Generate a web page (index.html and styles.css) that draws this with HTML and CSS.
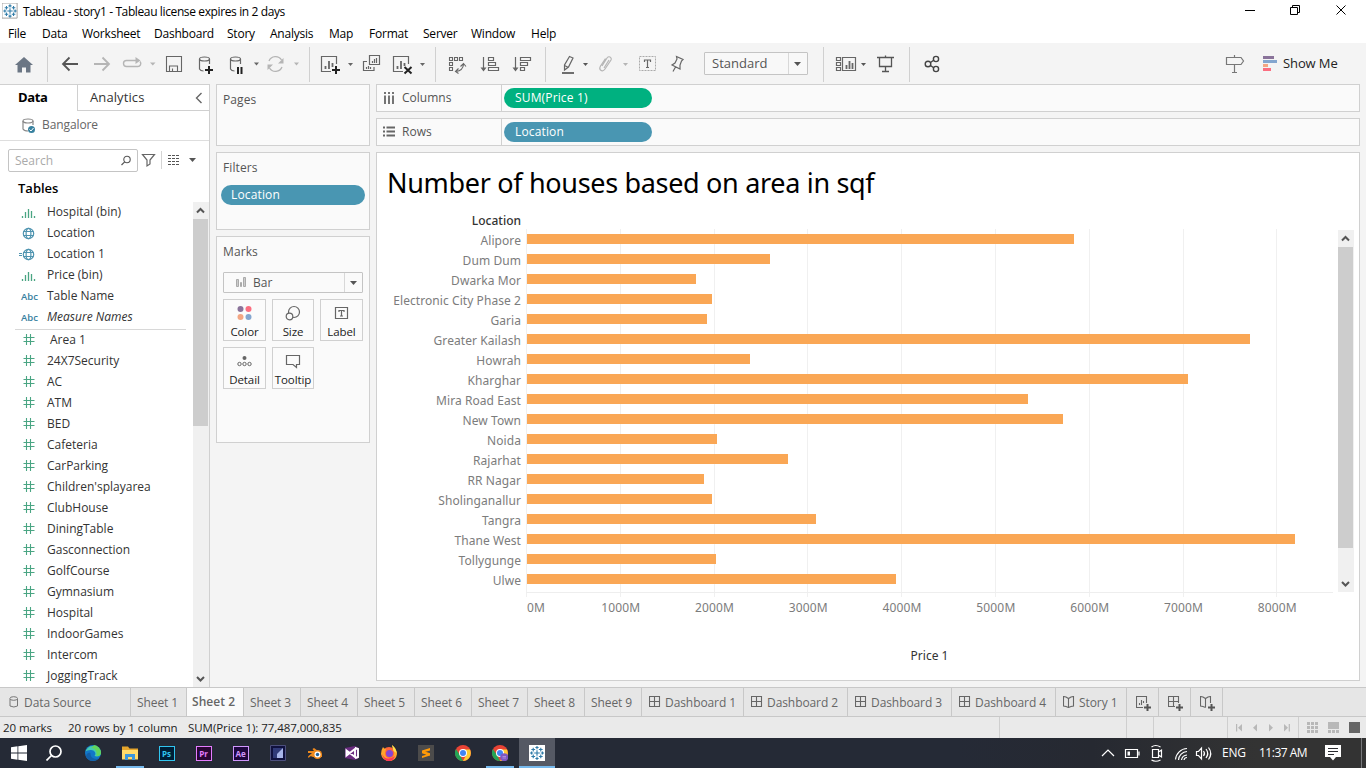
FILE: index.html
```
<!DOCTYPE html>
<html lang="en">
<head>
<meta charset="utf-8">
<title>Tableau - story1</title>
<link rel="stylesheet" href="styles.css">
</head>
<body>
<svg class="defs" width="0" height="0">
  <defs>
    <g id="hash"><path d="M6.500 5v11M10.500 5v11M3.500 8.500h11M3.500 12.500h11" fill="none" stroke="#4aa583" stroke-width="1.100"/></g>
    <g id="bins"><path d="M2.500 14v2M5.500 10v6M8.500 7v9M11.500 9v7M14.500 14v2" fill="none" stroke="#4aa583" stroke-width="1.300"/></g>
    <g id="globe"><g fill="none" stroke="#4f94b0" stroke-width="1.200"><circle cx="8.500" cy="10.500" r="5.200"/><ellipse cx="8.500" cy="10.500" rx="2.400" ry="5.200"/><path d="M3.500 8.500h10M3.500 12.500h10"/></g></g>
    <g id="dash"><path d="M.5.500h10v10H.5zM5.500.500v10M.5 5.500h10" fill="none" stroke="#666" stroke-width="1.100"/></g>
    <g id="book"><path d="M.5.500l2.500.5 2.500 1.500L8 1l2.500-.5v9.500L8 10.500l-2.500 1-2.500-1L.5 10zM5.500 2.500v9" fill="none" stroke="#666" stroke-width="1.100"/></g>
    <g id="logo" fill="none" stroke="#2f7ba8" stroke-width="1.200"><path d="M8 5v6M5 8h6M8 .5v3.500M6.300 2.200h3.400M8 12v3.500M6.300 13.800h3.400M2.200 6.300v3.400M.5 8H4M13.800 6.300v3.400M12 8h3.500M4 2.300v4M2 4.300h4M12 2.300v4M10 4.300h4M4 9.700v4M2 11.700h4M12 9.700v4M10 11.700h4"/></g>
  </defs>
</svg>
<div class="app">
  <header class="titlebar">
    <svg class="applogo" width="18" height="18" viewBox="-1 -1 18 18"><path d="M-1-1h17v17h-17z" fill="#fff" stroke="#999"/><use href="#logo"/></svg>
    <span class="apptitle">Tableau - story1 - Tableau license expires in 2 days</span>
    <svg class="winbtns" width="126" height="24" viewBox="1240 0 126 24"><g fill="none" stroke="#000"><path d="M1245 10.500h10M1290.500 7.500h7v7h-7zM1292.500 7.500v-2h7v7h-2M1336.500 5.500l9 9M1345.500 5.500l-9 9"/></g></svg>
  </header>
  <nav class="menubar">
    <span class="m1">File</span><span class="m2">Data</span><span class="m3">Worksheet</span><span class="m4">Dashboard</span><span class="m5">Story</span><span class="m6">Analysis</span><span class="m7">Map</span><span class="m8">Format</span><span class="m9">Server</span><span class="m10">Window</span><span>Help</span>
  </nav>
  <div class="toolbar">
    <svg width="47" height="41" viewBox="0 43 47 41"><path d="M24 57l9 8h-2.500v7.500h-4.500v-5h-4v5h-4.500V65H15z" fill="#6b7684"/></svg><i class="sep"></i>
    <svg width="36" height="41" viewBox="48 43 36 41"><path d="M78 64H63M69.500 57.500L63 64l6.500 6.500" fill="none" stroke="#555" stroke-width="1.800"/></svg>
    <svg width="34" height="41" viewBox="84 43 34 41"><path d="M94 64h15M102.500 57.500L109 64l-6.500 6.500" fill="none" stroke="#b5b5b5" stroke-width="1.800"/></svg>
    <svg width="42" height="41" viewBox="118 43 42 41"><path d="M131 60.500h-4.500a3 3 0 0 0 0 6h11a3 3 0 0 0 2.500-5M130 60.500h7" fill="none" stroke="#b5b5b5" stroke-width="1.400"/><path d="M135.500 57l5 3.500-5 3.500zM150 62.500h5.500l-2.700 3z" fill="#b5b5b5"/></svg>
    <svg width="30" height="41" viewBox="160 43 30 41"><path d="M166.500 56.500h15v15h-15zM169.500 71v-5h8v5M172.500 71v-2.500" fill="none" stroke="#666" stroke-width="1.100"/></svg>
    <svg width="32" height="41" viewBox="190 43 32 41"><g fill="none" stroke="#666" stroke-width="1.200"><ellipse cx="204.500" cy="59" rx="5" ry="2"/><path d="M199.500 59v10q1 2 4 2M209.500 59v5"/></g><path d="M209 66v8M205 70h8" stroke="#222" stroke-width="2"/></svg>
    <svg width="41" height="41" viewBox="222 43 41 41"><g fill="none" stroke="#666" stroke-width="1.200"><ellipse cx="235.500" cy="59" rx="5" ry="2"/><path d="M230.500 59v10q1 2 4 2M240.500 59v5"/></g><path d="M238 67v7M241.500 67v7" stroke="#222" stroke-width="2"/><path d="M254 62.500h5l-2.500 3z" fill="#666"/></svg>
    <svg width="46" height="41" viewBox="263 43 46 41"><path d="M269 61a7 7 0 0 1 12.500-1M282 67a7 7 0 0 1-12.500 1" fill="none" stroke="#b5b5b5" stroke-width="1.300"/><path d="M283.500 58v5.500h-5.500zM267.500 70v-5.500h5.500zM294 62.500h5l-2.500 3z" fill="#b5b5b5"/></svg><i class="sep"></i>
    <svg width="47" height="41" viewBox="310 43 47 41"><path d="M336.500 64v-7.500h-15v15H331" fill="none" stroke="#666" stroke-width="1.200"/><path d="M325.500 69v-3M329 69v-8M332.500 67v-4" stroke="#666" stroke-width="1.800"/><path d="M336 66v8M332 70h8" stroke="#222" stroke-width="2"/><path d="M348 63h5l-2.500 3z" fill="#666"/></svg>
    <svg width="29" height="41" viewBox="357 43 29 41"><g fill="none" stroke="#666" stroke-width="1.200"><path d="M369.500 55.500h10v9h-10zM367 61.500h-3.500v9h10.500V67"/><path d="M372.500 63v-2M374.500 63v-4M376.500 63v-5M366.500 69v-2M368.500 69v-3M370.500 69v-2"/></g></svg>
    <svg width="49" height="41" viewBox="386 43 49 41"><path d="M408.500 64v-7.500h-15v15H403" fill="none" stroke="#666" stroke-width="1.200"/><path d="M397.500 69v-3M401 69v-8M404.500 66v-3" stroke="#666" stroke-width="1.800"/><path d="M404.500 67l7 6.500M411.500 67l-7 6.500" stroke="#222" stroke-width="2"/><path d="M420 63h5l-2.500 3z" fill="#666"/></svg><i class="sep"></i>
    <svg width="37" height="41" viewBox="436 43 37 41"><path d="M449.500 57.500h3v3h-3zM454.500 57.500h3v3h-3zM459.500 57.500h3v3h-3zM449.500 62.500h3v3h-3zM449.500 67.500h3v3h-3zM463.500 64.500q-.5 6-7.500 7M460.500 66.500l3-3 2.500 3M458.500 68.500l-3 3 3 2" fill="none" stroke="#666" stroke-width="1.100"/></svg>
    <svg width="34" height="41" viewBox="473 43 34 41"><path d="M483.500 57v13M488.500 57.500h5v3h-5zM488.500 62.500h7v3h-7zM488.500 67.500h10v3h-10z" fill="none" stroke="#666" stroke-width="1.200"/><path d="M480.500 67.500h6l-3 4z" fill="#666"/></svg>
    <svg width="38" height="41" viewBox="507 43 38 41"><path d="M515.500 57v13M520.500 57.500h10v3h-10zM520.500 62.500h7v3h-7zM520.500 67.500h4v3h-4z" fill="none" stroke="#666" stroke-width="1.200"/><path d="M512.500 67.500h6l-3 4z" fill="#666"/></svg><i class="sep"></i>
    <svg width="46" height="41" viewBox="546 43 46 41"><path d="M569.500 56.500l3.500 1.500-4.500 9-4 3v-5zM564.500 65.500l4 2" fill="none" stroke="#666" stroke-width="1.200"/><path d="M562 73h12" stroke="#555" stroke-width="1.700"/><path d="M583 63h5l-2.500 3z" fill="#555"/></svg>
    <svg width="41" height="41" viewBox="592 43 41 41"><path d="M602 66l5-8q2-2.500 4 0 .5 1 0 2l-6 9q-2 3-4.500 1-1.500-1.500 0-4l5-7.500M604 68l5-8" fill="none" stroke="#b5b5b5" stroke-width="1.200"/><path d="M623 63h5l-2.500 3z" fill="#b5b5b5"/></svg>
    <svg width="31" height="41" viewBox="633 43 31 41"><path d="M639.500 56.500h16v14h-16z" fill="none" stroke="#aaa" stroke-dasharray="2 1"/><path d="M644.500 62v-2h6v2M647.500 60v8M646 67.500h3" fill="none" stroke="#666" stroke-width="1.200"/></svg>
    <svg width="40" height="41" viewBox="664 43 40 41"><path d="M676.500 56.500l6.500 3-1.500 1.500-1.500 4v4l-8-4 3-2 2-4zM675.500 67l-2.500 4.500" fill="none" stroke="#666" stroke-width="1.200"/></svg>
    <div class="fit"><span>Standard</span><b><svg width="7" height="4"><path d="M0 0h7L3.500 4z" fill="#555"/></svg></b></div>
    <i class="sep afterfit"></i>
    <svg width="47" height="41" viewBox="824 43 47 41"><path d="M836.500 57.500h4v3h-4zM836.500 62.500h4v3h-4zM836.500 67.500h4v3h-4zM842.500 57.500h13v13h-13z" fill="none" stroke="#666" stroke-width="1.200"/><path d="M846.500 69v-4M849.500 69v-8M852.500 69v-6" stroke="#666" stroke-width="1.800"/><path d="M861 63h5l-2.500 3z" fill="#555"/></svg>
    <svg width="38" height="41" viewBox="871 43 38 41"><path d="M877 57.500h17M879.500 57.500v9h12v-9M885.500 55.500v2M885.500 66.500v5M882 71.500h7" fill="none" stroke="#555" stroke-width="1.300"/></svg><i class="sep"></i>
    <svg width="40" height="41" viewBox="910 43 40 41"><g fill="none" stroke="#444" stroke-width="1.400"><circle cx="928" cy="64" r="2.800"/><circle cx="936" cy="59" r="2.600"/><circle cx="936" cy="69" r="2.600"/><path d="M930.500 62.500l3.500-2.500M930.500 65.500l3.500 2.500"/></g></svg>
    <svg class="guide" width="40" height="41" viewBox="1215 43 40 41"><path d="M1226.500 57.500h14.500l2.500 3.500-2.500 3.500h-14.500zM1234.500 55v2.500M1234.500 64.500v8M1232 72.500h5" fill="none" stroke="#777" stroke-width="1.200"/></svg>
    <svg width="28" height="41" viewBox="1255 43 28 41"><path d="M1263 56h11v3h-11z" fill="#8a739a"/><path d="M1263 60h14v3h-14z" fill="#84a6cf"/><path d="M1263 64h5v3h-5z" fill="#f3a683"/><path d="M1263 68h8v3h-8z" fill="#fb6e80"/></svg>
    <span class="showme">Show Me</span>
  </div>
  <div class="main">
    <aside class="datapane">
      <div class="panetabs"><b>Data</b><span><em>Analytics</em><svg width="8" height="12"><path d="M6.500 1L1.500 6l5 5" fill="none" stroke="#666" stroke-width="1.400"/></svg></span></div>
      <div class="source"><svg width="16" height="18"><g fill="none" stroke="#888" stroke-width="1.200"><ellipse cx="6" cy="4" rx="5" ry="2"/><path d="M1 4v8q1 2 5 2M11 4v4"/></g><circle cx="9.500" cy="12.500" r="3.500" fill="#38819f"/><path d="M7.500 12.500l1.500 1.500 2.500-3" fill="none" stroke="#fff"/></svg><span>Bangalore</span></div>
      <div class="searchrow"><div class="search"><span>Search</span><svg width="12" height="12"><circle cx="7" cy="4.500" r="3.200" fill="none" stroke="#555" stroke-width="1.100"/><path d="M4.700 6.800L1.500 10" stroke="#555" stroke-width="1.200"/></svg></div>
        <svg width="72" height="24" viewBox="137 148 72 24"><path d="M142.500 154.500h12l-4.500 5.500v4l-3 2v-6z" fill="none" stroke="#666" stroke-width="1.200"/><path d="M161.500 151v18" stroke="#d4d4d4"/><path d="M168 155.500h12M168 158.500h12M168 161.500h12M168 164.500h12" stroke="#555" stroke-dasharray="3 1"/><path d="M189 158h7l-3.500 4z" fill="#555"/></svg></div>
      <div class="tables">Tables</div>
      <div class="fields">
        <ul>
          <li><svg><use href="#bins"/></svg>Hospital (bin)</li>
          <li><svg><use href="#globe"/></svg>Location</li>
          <li><svg class="calc" viewBox="-4 0 24 21"><use href="#globe"/><path d="M-1 9.500h3M-1 11.500h3" stroke="#4f94b0"/></svg>Location 1</li>
          <li><svg><use href="#bins"/></svg>Price (bin)</li>
          <li><i class="abc">Abc</i>Table Name</li>
          <li class="last"><i class="abc">Abc</i><em>Measure Names</em></li>
          <li class="area"><svg class="ahash"><use href="#hash" x="5"/></svg>Area 1</li>
          <li><svg><use href="#hash" x="0"/></svg>24X7Security</li>
          <li><svg><use href="#hash"/></svg>AC</li>
          <li><svg><use href="#hash"/></svg>ATM</li>
          <li><svg><use href="#hash"/></svg>BED</li>
          <li><svg><use href="#hash"/></svg>Cafeteria</li>
          <li><svg><use href="#hash"/></svg>CarParking</li>
          <li><svg><use href="#hash"/></svg>Children'splayarea</li>
          <li><svg><use href="#hash"/></svg>ClubHouse</li>
          <li><svg><use href="#hash"/></svg>DiningTable</li>
          <li><svg><use href="#hash"/></svg>Gasconnection</li>
          <li><svg><use href="#hash"/></svg>GolfCourse</li>
          <li><svg><use href="#hash"/></svg>Gymnasium</li>
          <li><svg><use href="#hash"/></svg>Hospital</li>
          <li><svg><use href="#hash"/></svg>IndoorGames</li>
          <li><svg><use href="#hash"/></svg>Intercom</li>
          <li><svg><use href="#hash"/></svg>JoggingTrack</li>
        </ul>
        <div class="scroll"><svg width="15" height="17"><path d="M4 10.500L7.500 7l3.500 3.500" fill="none" stroke="#555" stroke-width="2"/></svg><i class="thumb"></i><svg class="down" width="15" height="17"><path d="M4 7l3.500 3.500L11 7" fill="none" stroke="#555" stroke-width="2"/></svg></div>
      </div>
    </aside>
    <section class="cards">
      <div class="card pages"><h3>Pages</h3></div>
      <div class="card filters"><h3>Filters</h3><div class="pill blue">Location</div></div>
      <div class="card marks"><h3>Marks</h3>
        <div class="marktype"><svg width="11" height="11"><path d="M.5 2.500h2v7h-2zM4.500 5.500h1v4h-1zM7.500.500h2v9h-2z" fill="#ccc" stroke="#aaa"/></svg><span>Bar</span><b><svg width="7" height="4"><path d="M0 0h7L3.500 4z" fill="#555"/></svg></b></div>
        <div class="markgrid">
          <div><svg width="16" height="16"><circle cx="3.500" cy="4" r="3" fill="#8a739a"/><circle cx="11.500" cy="4" r="3" fill="#fb6e80"/><circle cx="3.500" cy="12" r="3" fill="#f3a683"/><circle cx="11.500" cy="12" r="3" fill="#84a6cf"/></svg><span>Color</span></div>
          <div><svg width="16" height="16"><g fill="#fafafa" stroke="#666" stroke-width="1.200"><circle cx="9" cy="7" r="5.500"/><circle cx="4.500" cy="11.500" r="3.300"/></g></svg><span>Size</span></div>
          <div><svg width="16" height="16"><path d="M1.500 2.500h12v11h-12zM5 7V5.500h5V7M7.500 5.500v5.500M6 11h3" fill="none" stroke="#666" stroke-width="1.200"/></svg><span>Label</span></div>
          <div><svg width="16" height="16"><circle cx="7.500" cy="5" r="2" fill="#666"/><g fill="none" stroke="#666"><circle cx="2.500" cy="11" r="1.700"/><circle cx="7.500" cy="11" r="1.700"/><circle cx="12.500" cy="11" r="1.700"/></g></svg><span>Detail</span></div>
          <div><svg width="16" height="16"><path d="M1.500 2.500h13v9h-3v3l-3.500-3H1.500z" fill="none" stroke="#666" stroke-width="1.200"/></svg><span>Tooltip</span></div>
        </div>
      </div>
    </section>
    <section class="sheet">
      <div class="shelf"><div class="shelfname"><svg width="12" height="12"><path d="M2 0v2M6 0v2M10 0v2M2 3.500V12M6 3.500V12M10 3.500V12" stroke="#666" stroke-width="1.800"/></svg><span>Columns</span></div><div class="pill green">SUM(Price 1)</div></div>
      <div class="shelf"><div class="shelfname"><svg width="12" height="12"><path d="M0 1.500h2M0 5.500h2M0 9.500h2M3.500 1.500H12M3.500 5.500H12M3.500 9.500H12" stroke="#666" stroke-width="1.800"/></svg><span>Rows</span></div><div class="pill blue">Location</div></div>
      <div class="view">
        <h1>Number of houses based on area in sqf</h1>
        <div class="chart">
          <div class="labels"><b>Location</b><span>Alipore</span><span>Dum Dum</span><span>Dwarka Mor</span><span>Electronic City Phase 2</span><span>Garia</span><span>Greater Kailash</span><span>Howrah</span><span>Kharghar</span><span>Mira Road East</span><span>New Town</span><span>Noida</span><span>Rajarhat</span><span>RR Nagar</span><span>Sholinganallur</span><span>Tangra</span><span>Thane West</span><span>Tollygunge</span><span>Ulwe</span></div>
          <div class="plotcol">
            <div class="plot">
              <i style="width:547px"></i><i style="width:243px"></i><i style="width:169px"></i><i style="width:185px"></i><i style="width:180px"></i><i style="width:723px"></i><i style="width:223px"></i><i style="width:661px"></i><i style="width:501px"></i><i style="width:536px"></i><i style="width:190px"></i><i style="width:261px"></i><i style="width:177px"></i><i style="width:185px"></i><i style="width:289px"></i><i style="width:768px"></i><i style="width:189px"></i><i style="width:369px"></i>
            </div>
            <div class="marksline"></div>
            <div class="ticks"><span>0M</span><span>1000M</span><span>2000M</span><span>3000M</span><span>4000M</span><span>5000M</span><span>6000M</span><span>7000M</span><span>8000M</span></div>
            <div class="axis">Price 1</div>
          </div>
          <div class="scroll vscroll"><svg width="15" height="17"><path d="M4 10.500L7.500 7l3.500 3.500" fill="none" stroke="#555" stroke-width="2"/></svg><i class="thumb"></i><svg class="down" width="15" height="17"><path d="M4 7l3.500 3.500L11 7" fill="none" stroke="#555" stroke-width="2"/></svg></div>
        </div>
      </div>
    </section>
  </div>
  <div class="tabs">
    <div class="tab ds"><svg width="10" height="12"><path d="M1 3v7q4 2 7.500 0V3" fill="none" stroke="#777"/><ellipse cx="4.700" cy="2.500" rx="3.800" ry="1.800" fill="none" stroke="#777"/></svg><span>Data Source</span></div>
    <div class="tab s56">Sheet 1</div><div class="tab s57 on">Sheet 2</div><div class="tab s57">Sheet 3</div><div class="tab s57">Sheet 4</div><div class="tab s57">Sheet 5</div><div class="tab s57">Sheet 6</div><div class="tab s56">Sheet 7</div><div class="tab s57">Sheet 8</div><div class="tab s57">Sheet 9</div>
    <div class="tab d1"><svg width="12" height="12"><use href="#dash"/></svg>Dashboard 1</div><div class="tab d2"><svg width="12" height="12"><use href="#dash"/></svg>Dashboard 2</div><div class="tab d2"><svg width="12" height="12"><use href="#dash"/></svg>Dashboard 3</div><div class="tab d2"><svg width="12" height="12"><use href="#dash"/></svg>Dashboard 4</div>
    <div class="tab st"><svg width="12" height="12"><use href="#book"/></svg>Story 1</div>
    <div class="tab add"><svg width="16" height="17"><path d="M10.500 7V.5H.5v11H7M3.500 9V7M5.500 9V4M7.500 7V5" fill="none" stroke="#666" stroke-width="1.100"/><path d="M11.500 8v7M8 11.500h7" stroke="#555" stroke-width="2"/></svg></div>
    <div class="tab add"><svg width="16" height="17"><path d="M10.500 7V.5H.5v10H7M5.500.5v10M.5 5.500h10" fill="none" stroke="#666" stroke-width="1.100"/><path d="M11.500 8v7M8 11.500h7" stroke="#555" stroke-width="2"/></svg></div>
    <div class="tab add"><svg width="16" height="17"><path d="M10.500 7V.5L8 1 5.500 2.500 3 1 .5.500V10l2.500.5 2.500 1M5.500 2.500v9" fill="none" stroke="#666" stroke-width="1.100"/><path d="M11.500 8v7M8 11.500h7" stroke="#555" stroke-width="2"/></svg></div>
  </div>
  <div class="status">
    <span class="c1">20 marks</span><span class="c2">20 rows by 1 column</span><span class="c3">SUM(Price 1): 77,487,000,835</span>
    <i class="w1"></i><i class="w2"></i><i class="w3"></i><i class="w4"></i>
    <svg width="139" height="21" viewBox="1227 717 139 21"><path d="M1227.500 717v21M1298.500 717v21" stroke="#cfcfcf"/><path d="M1236 724h1.200v7.500h-1.200zM1242 724v7.500l-4-3.700zM1257 724v7.500l-4-3.700zM1269 724v7.500l4-3.700zM1284 724v7.500l4-3.700zM1288.700 724h1.200v7.500h-1.200z" fill="#b8b8b8"/><path d="M1307 723.500h11M1307 727.500h11M1307 731.500h11" stroke="#b8b8b8" stroke-width="3" stroke-dasharray="3 1"/><path d="M1328 722h11v7h-11z" fill="#b8b8b8"/><path d="M1328 731.500h11" stroke="#b8b8b8" stroke-width="3" stroke-dasharray="3 1"/><path d="M1349 722h11v11h-11z" fill="#666"/></svg>
  </div>
  <footer class="taskbar">
    <div class="apps">
      <div><svg viewBox="0 0 16 16"><path d="M0 2.200l6.500-.9v6.200H0zM7.300 1.200L16 0v7.500H7.300zM0 8.500h6.500v6.200L0 13.800zM7.300 8.500H16V16l-8.700-1.200z" fill="#fff"/></svg></div>
      <div class="find"><svg viewBox="0 0 16 16"><circle cx="9.500" cy="6.500" r="5.500" fill="none" stroke="#fff" stroke-width="1.700"/><path d="M5.500 10.500L.5 15.500" stroke="#fff" stroke-width="1.700"/></svg></div>
      <div><svg viewBox="0 0 16 16"><circle cx="8" cy="8" r="8" fill="#1277c9"/><path d="M.5 6.500A8 8 0 0 1 16 7.500c0 4-4 4.500-6.500 3.500C12 8 9 4.500 5.500 5 3 5 1.500 6 .5 6.500z" fill="#45cbb0"/><path d="M9 .1A8 8 0 0 1 16 7.500c0 3-2.500 4-4.500 3.500 1-5-2-8-5-8z" fill="#62d55d"/><path d="M5.500 8c-.5 4 3.500 7 8 5.500A8 8 0 0 1 1 12C1 9 3 7 5.500 8z" fill="#135fa8"/></svg></div>
      <div class="run"><svg viewBox="0 0 16 16"><path d="M0 1.500h6l1.500 2H16V14H0z" fill="#e5a52c"/><path d="M0 5h16v9.500H0z" fill="#ffdb6a"/><path d="M3 15V9h10v6h-3v-3H6v3z" fill="#3b97dc"/></svg></div>
      <div><b class="adobe ps">Ps</b></div>
      <div><b class="adobe pr">Pr</b></div>
      <div><b class="adobe ae">Ae</b></div>
      <div><svg viewBox="0 0 16 16"><path d="M.5.500h15v15H.5z" fill="#10113f" stroke="#4c4f7d"/><path d="M3 3h10v10H3z" fill="#303a79"/><path d="M3 3l10 10H3z" fill="#a8b5e9" transform="rotate(-90 8 8)"/><path d="M3 8h4v5H3z" fill="#303a79"/></svg></div>
      <div><svg viewBox="0 0 16 16"><path d="M1 6h6L5.500 4 7 3l8 6v3H6l-2.500-1L6 9 1.500 13 1 11.500 5 8H1z" fill="#f08a1d"/><circle cx="10.500" cy="9.500" r="4.500" fill="#f08a1d"/><circle cx="10.500" cy="9.500" r="3" fill="#fff"/><circle cx="10.500" cy="9.500" r="1.700" fill="#22639e"/></svg></div>
      <div><svg viewBox="0 0 16 16"><path d="M1 3l10-2 4 2v10l-4 2-10-2z" fill="#6a2c80"/><path d="M2.500 5.500L11 12V4L2.500 10.500zM11 3l3 1v8l-3 1" fill="none" stroke="#fff" stroke-width="1.900"/></svg></div>
      <div><svg viewBox="0 0 16 16"><circle cx="8" cy="9" r="7" fill="#ff653b"/><path d="M2 2q1 2 3 2L4 8q0 5 5 5 5-1 4-6L11 0q5 4 5 9-1 7-8 7-7-1-8-7 0-4 2-7z" fill="#ffa52b"/><circle cx="8.500" cy="8.500" r="3.500" fill="#8446d5"/><path d="M1 9q4 8 13 2-2 6-8 5Q2 14 1 9z" fill="#ff3858"/><path d="M11 0q4 3 4.500 8l-3-2z" fill="#ffe14d"/></svg></div>
      <div><svg viewBox="0 0 16 16"><path d="M0 0h16v16H0z" fill="#4c4b4b"/><path d="M12 3L4 5.500v2.700L12 11v-2.500L7 7l5-1.500zM4 13l8-2.500V8.200L4 5.500V8l5 1.600-5 1.400z" fill="#ff9a08"/></svg></div>
      <div><svg viewBox="0 0 16 16"><circle cx="8" cy="8" r="8" fill="#ea4335"/><path d="M1 4l4.500 7 2.500 5A8 8 0 0 1 1 4z" fill="#24a455"/><path d="M15 4.500H8l3.500 5L8 16a8 8 0 0 0 7-11.500z" fill="#ffcc33"/><circle cx="8" cy="8" r="4" fill="#fff"/><circle cx="8" cy="8" r="3" fill="#4285f4"/></svg></div>
      <div class="run"><svg viewBox="0 0 16 16"><circle cx="8" cy="8" r="8" fill="#ea4335"/><path d="M1 4l4.500 7 2.500 5A8 8 0 0 1 1 4z" fill="#24a455"/><path d="M15 4.500H8l3.500 5L8 16a8 8 0 0 0 7-11.500z" fill="#ffcc33"/><circle cx="8" cy="8" r="4" fill="#fff"/><circle cx="8" cy="8" r="3" fill="#4285f4"/><circle cx="12.200" cy="12.200" r="4" fill="#7e57c2"/><path d="M10.500 11.500h3.500M10.500 13h3.500" stroke="#b89be0" stroke-width=".8"/></svg></div>
      <div class="active"><svg viewBox="-.5 -.5 17 17"><path d="M-.5-.5h17v17h-17z" fill="#fff"/><use href="#logo"/></svg></div>
    </div>
    <svg class="tray" width="121" height="30" viewBox="1095 738 121 30"><g fill="none" stroke="#fff" stroke-width="1.200"><path d="M1102 756l6-6 6 6M1125.500 749.500h12v8h-12zM1139 751.500v4"/><path d="M1127.500 751.500h2.500v4h-2.500z" fill="#fff" stroke="none"/><path d="M1152.500 749.500h6v8h-6zM1158.500 752l3-2v7l-3-2M1151.500 747q4-3 9 0M1151.500 760q4 2.500 9 0"/><path d="M1175.500 759.500a12 12 0 0 1 11.500-11M1178.500 760a9 9 0 0 1 8.500-8.500M1181.500 760a6 6 0 0 1 5.500-5M1184 760a3 3 0 0 1 3-2.500"/><path d="M1196.500 751.500h2l3-3.500v11l-3-3.500h-2zM1203.500 751q2 2.500 0 5M1206 749q3.500 4.500 0 9M1208.500 747.500q4.500 6 0 12"/></g></svg>
    <span class="lang">ENG</span><span class="clock">11:37 AM</span>
    <svg class="note" width="45" height="30" viewBox="1321 738 45 30"><path d="M1325 745h16v12h-5l-3 3.500-3-3.500h-5z" fill="#fff"/><path d="M1328 748.500h10M1328 751.500h10M1328 754.500h6" stroke="#2b2c31"/><path d="M1361.500 738v30" stroke="#77787b"/></svg>
  </footer>
</div>
</body>
</html>
```
FILE: styles.css
```
* { box-sizing: border-box; }
body { margin: 0; width: 1366px; height: 768px; overflow: hidden; font-family: "Open Sans", "Noto Sans", sans-serif; font-size: 12px; color: #222; background: #f4f4f4; }
svg { display: block; flex: none; }
.defs { position: absolute; }
.app { display: flex; flex-direction: column; width: 1366px; height: 768px; }
span, b, em, h1, h3 { white-space: nowrap; }
.titlebar { height: 24px; background: #fff; display: flex; align-items: center; padding-left: 2px; color: #000; }
.applogo { width: 16px; height: 16px; margin-top: -2px; }
.apptitle { margin: -2px 0 0 5px; font-size: 12px; letter-spacing: -.38px; }
.winbtns { margin-left: auto; }
.menubar { height: 19px; background: #fff; display: flex; align-items: center; padding-left: 8px; color: #000; letter-spacing: -.22px; line-height: 19px; }
.m1 { width: 34px; } .m2 { width: 40px; } .m3 { width: 72px; } .m4 { width: 73px; } .m5 { width: 43px; } .m6 { width: 59px; } .m7 { width: 40px; } .m8 { width: 54px; } .m9 { width: 48px; } .m10 { width: 60px; }
.toolbar { height: 41px; display: flex; background: #f4f4f4; }
.sep { width: 1px; height: 35px; margin-top: 4px; background: #d0d0d0; }
.fit { width: 104px; height: 23px; margin-top: 9px; border: 1px solid #c4c4c4; border-radius: 1px; background: #f8f8f8; display: flex; color: #555; font-size: 13px; line-height: 21px; }
.fit span { flex: 1; padding-left: 7px; letter-spacing: 0; }
.fit b { width: 19px; border-left: 1px solid #d8d8d8; padding: 9px 0 0 5px; }
.afterfit { margin-left: 15px; }
.guide { margin-left: auto; }
.showme { width: 83px; line-height: 40px; font-size: 13px; letter-spacing: -.1px; }
.main { height: 603px; display: flex; }
.datapane { width: 210px; border-top: 1px solid #d0d0d0; border-right: 1px solid #d0d0d0; background: #fff; display: flex; flex-direction: column; }
.panetabs { height: 26px; display: flex; font-size: 13px; line-height: 25px; color: #000; }
.panetabs > b { width: 77px; padding-left: 18px; letter-spacing: -.4px; }
.panetabs > span { flex: 1; display: flex; align-items: center; justify-content: space-between; border-left: 1px solid #d0d0d0; border-bottom: 1px solid #d0d0d0; padding: 0 6px 0 12px; color: #333; }
.panetabs em { letter-spacing: .1px; }
em { font-style: normal; }
.source { height: 30px; border-bottom: 1px solid #dedede; display: flex; align-items: center; padding-left: 22px; gap: 4px; color: #666; letter-spacing: -.1px; }
.source span { margin-top: -2px; }
.searchrow { display: flex; height: 24px; margin-top: 7px; padding-left: 8px; }
.search { width: 130px; height: 23px; margin-top: 1px; border: 1px solid #c4c4c4; border-radius: 2px; display: flex; align-items: center; justify-content: space-between; padding: 0 5px 0 6px; color: #aaa; }
.searchrow > svg { margin-left: -1px; }
.tables { height: 30px; padding-left: 18px; line-height: 32px; font-size: 13px; font-weight: 600; color: #000; }
.fields { flex: 1; min-height: 0; display: flex; }
.fields ul { list-style: none; margin: 0; padding: 0; width: 193px; overflow: hidden; }
.fields li { height: 21px; line-height: 20px; padding-left: 20px; display: flex; color: #333; white-space: nowrap; }
.fields li svg { width: 20px; height: 21px; margin-right: 7px; }
.fields li use[href="#hash"] { transform: translate(0, -1px); }
.fields li .calc { width: 24px; margin-left: -4px; }
.fields li em { font-style: italic; }
.fields .abc { width: 27px; padding-left: 1px; font: 600 9.500px/22px "Open Sans", sans-serif; color: #38819f; }
.fields .last { height: 23px; }
.fields .area { height: 21px; box-shadow: 0 -1px 0 #d8d8d8; margin-left: 15px; width: 171px; padding-left: 0; }
.fields .area .ahash { width: 25px; margin-right: 10px; }
.scroll { width: 16px; background: #f0f0f0; display: flex; flex-direction: column; }
.thumb { display: block; height: 207px; background: #cdcdcd; width: 15px; }
.scroll .down { margin-top: auto; }
.cards { width: 154px; margin-left: 6px; display: flex; flex-direction: column; gap: 6px; }
.card { background: #fafafa; border: 1px solid #d0d0d0; }
.card h3 { margin: 0; padding-left: 6px; font-size: 12px; font-weight: 400; line-height: 30px; color: #555; letter-spacing: .1px; }
.pages { height: 62px; } .filters { height: 78px; } .marks { height: 207px; }
.pill { height: 20px; border-radius: 10px; color: #fff; line-height: 20px; padding-left: 10px; letter-spacing: .15px; }
.blue { background: #4996b2; } .green { background: #00b180; }
.filters .pill { margin: 2px 4px; width: 144px; }
.marktype { margin: 5px 6px 0; height: 21px; border: 1px solid #c4c4c4; border-radius: 1px; display: flex; align-items: center; padding-left: 12px; color: #555; }
.marktype span { flex: 1; padding-left: 6px; }
.marktype b { height: 19px; width: 18px; border-left: 1px solid #d8d8d8; padding: 8px 0 0 5px; }
.markgrid { display: grid; grid-template-columns: 43px 42px 43px; grid-auto-rows: 42px; gap: 6px; margin: 6px; }
.markgrid div { border: 1px solid #d0d0d0; background: #fbfbfb; display: flex; flex-direction: column; align-items: center; padding-top: 5px; color: #222; font-size: 11.500px; letter-spacing: -.1px; }
.markgrid span { line-height: 22px; }
.sheet { width: 984px; margin-left: 6px; display: flex; flex-direction: column; gap: 6px; }
.shelf { height: 28px; background: #fafafa; border: 1px solid #d0d0d0; display: flex; }
.shelfname { width: 125px; border-right: 1px solid #d0d0d0; padding-left: 6px; display: flex; gap: 7px; align-items: center; color: #555; letter-spacing: 0; }
.shelfname span { margin-top: -1px; }
.shelf .pill { margin: 3px 0 0 2px; width: 148px; padding-left: 11px; }
.view { height: 529px; background: #fff; border: 1px solid #d0d0d0; }
h1 { margin: 0; padding-left: 10px; font: 400 27px/59px "Noto Sans", sans-serif; height: 58px; color: #000; letter-spacing: -.32px; }
.chart { display: flex; }
.labels { width: 144px; display: flex; flex-direction: column; text-align: right; font: 12px/21px "Noto Sans", sans-serif; color: #7c7c7c; letter-spacing: .07px; }
.labels b { height: 19px; line-height: 20px; color: #333; font-weight: 500; letter-spacing: 0; }
.labels span { height: 20px; }
.plotcol { width: 812px; padding: 18px 0 0 5px; }
.plot { height: 364px; width: 807px; border-bottom: 1px solid #eee; padding: 5px 0 0 1px; display: flex; flex-direction: column; gap: 10px; background: repeating-linear-gradient(90deg, #f0f0f0 0 1px, transparent 1px 93.800px); }
.plot i { display: block; height: 10px; background: #faa755; }
.marksline { width: 807px; height: 4px; background: repeating-linear-gradient(90deg, #f0f0f0 0 1px, transparent 1px 93.800px); }
.ticks { display: flex; margin-top: -3px; font: 12px/28px "Noto Sans", sans-serif; color: #7c7c7c; letter-spacing: .15px; }
.ticks span { width: 93.800px; flex: none; text-align: center; position: relative; left: -46px; }
.ticks span:first-child { left: 1px; text-align: left; }
.ticks { width: 807px; }
.axis { padding-top: 24px; text-align: center; font: 12px/20px "Noto Sans", sans-serif; color: #333; }
.vscroll { height: 362px; margin: 19px 0 0 5px; width: 16px; }
.vscroll .thumb { height: 301px; }
.tabs { height: 30px; border-top: 1px solid #c8c8c8; border-bottom: 1px solid #c8c8c8; background: #e6e6e6; display: flex; color: #666; }
.tab { border-right: 1px solid #c8c8c8; line-height: 30px; padding-left: 6px; white-space: nowrap; display: flex; letter-spacing: -.08px; }
.tab svg { margin: 8px 4px 0 0; }
.ds { width: 131px; padding-left: 9px; }
.ds svg { margin-right: 5px; }
.s56 { width: 56px; } .s57 { width: 57px; }
.on { background: #fafafa; font-weight: 600; line-height: 27px; padding-left: 5px; letter-spacing: .05px; }
.d1 { width: 102px; padding-left: 7px; } .d2 { width: 104px; padding-left: 7px; } .st { width: 71px; padding-left: 7px; } .add { width: 32px; padding-left: 9px; }
.status { height: 21px; display: flex; background: #eaeaea; line-height: 21px; font-size: 11.500px; color: #222; padding-left: 3px; letter-spacing: -.05px; }
.c1 { width: 65px; } .c2 { width: 120px; } .c3 { flex: 1; }
.status i { border-left: 1px solid #cfcfcf; }
.w1 { width: 127px; } .w2 { width: 27px; } .w3 { width: 27px; } .w4 { width: 47px; }
.taskbar { height: 30px; display: flex; background: linear-gradient(90deg, #252a36 0, #252a36 70%, #262931 80%, #333333 92%, #333 100%); color: #fff; }
.apps { display: flex; flex: 1; }
.apps div { width: 37px; display: flex; align-items: center; justify-content: center; }
.apps div svg { width: 16px; height: 16px; }
.apps .find { padding-right: 3px; }
.apps .run { position: relative; }
.apps .run::after { content: ""; position: absolute; left: 5px; bottom: 0; width: 28px; height: 2px; background: #76b9ed; }
.apps .active { background: #555964; border-bottom: 2px solid #76b9ed; padding-top: 2px; width: 36px; margin-left: 1px; }
.adobe { width: 16px; height: 15px; border: 1px solid; font-size: 8px; line-height: 13px; text-align: center; }
.ps { color: #31c5f0; background: #001e36; } .pr { color: #e57cff; background: #2a0634; } .ae { color: #cf96fd; background: #1f0740; }
.lang { width: 43px; padding-left: 6px; line-height: 30px; letter-spacing: -.2px; }
.clock { width: 62px; line-height: 30px; letter-spacing: -.5px; }
```
